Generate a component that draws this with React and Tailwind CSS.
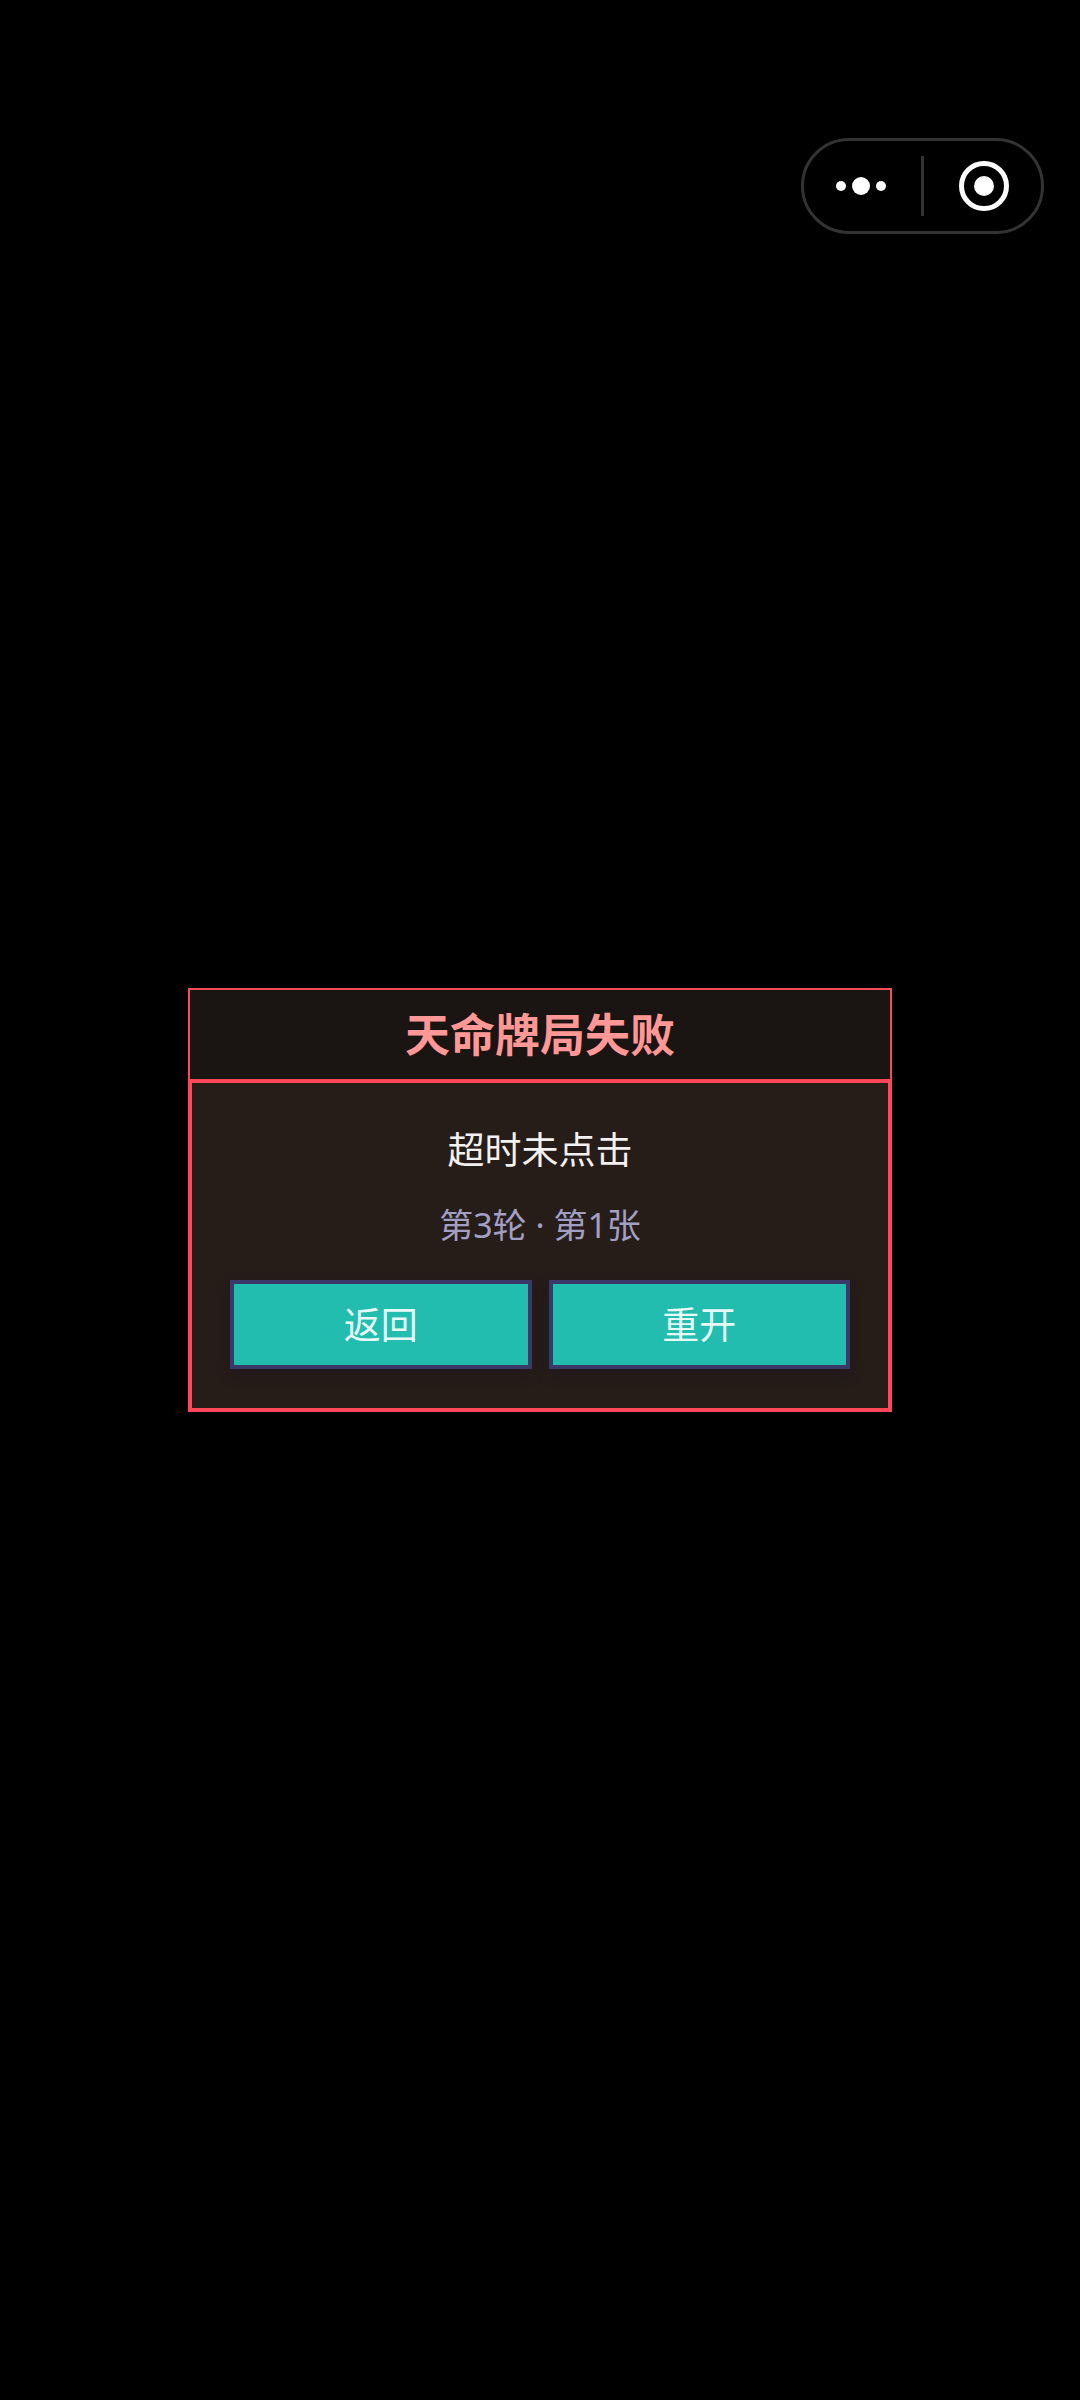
const CapsuleMenu = () => (
  <div className="flex h-24 w-[243px] items-center rounded-full border-3 border-[#333333]">
    <button type="button" aria-label="更多" className="flex h-full flex-1 items-center justify-center pr-[3px]">
      <svg className="h-5 w-[50px]" viewBox="0 0 50 20" fill="#fff">
        <circle cx="5" cy="10" r="5" />
        <circle cx="25" cy="10" r="9" />
        <circle cx="45" cy="10" r="5" />
      </svg>
    </button>
    <span className="h-[60px] w-[3px] bg-[#333333]" />
    <button type="button" aria-label="关闭" className="flex h-full flex-1 items-center justify-center pl-[3px]">
      <svg className="size-[50px]" viewBox="0 0 50 50">
        <circle cx="25" cy="25" r="22.5" fill="none" stroke="#fff" strokeWidth="5" />
        <circle cx="25" cy="25" r="10" fill="#fff" />
      </svg>
    </button>
  </div>
);

const actions = [
  { id: 'back', label: '返回' },
  { id: 'restart', label: '重开' },
];

const ResultDialog = () => (
  <section role="dialog" aria-labelledby="result-title" className="w-full max-w-[704px] text-center">
    <header className="border-2 border-b-0 border-[#f74c5a] bg-[#1a1512]">
      <h1 id="result-title" className="py-4 text-[45px] leading-[57px] font-bold text-[#ff9796]">
        天命牌局失败
      </h1>
    </header>

    <div className="border-4 border-[#ff4757] bg-[#261d19] px-[38px] py-[39px]">
      <p className="text-[37px] leading-[56px] text-[#f1f1f1]">超时未点击</p>
      <p className="mt-[22px] text-[34px] leading-[50px] text-[#a29fc4]">第3轮 · 第1张</p>

      <div className="mt-[30px] grid grid-cols-2 gap-[17px]">
        {actions.map(action => (
          <button
            key={action.id}
            type="button"
            className="h-[89px] border-4 border-[#393a67] bg-[#22bdae] text-[37px] leading-[56px] text-[#e6f9f6] shadow-[0_6px_12px_rgba(26,16,32,0.4)]"
          >
            {action.label}
          </button>
        ))}
      </div>
    </div>
  </section>
);

export default function App() {
  return (
    <div
      lang="zh-CN"
      className="grid min-h-screen bg-black font-['Noto_Sans','Noto_Sans_CJK_SC',sans-serif]"
    >
      <nav className="col-start-1 row-start-1 mt-[138px] mr-9 self-start justify-self-end">
        <CapsuleMenu />
      </nav>
      <main className="col-start-1 row-start-1 flex items-center justify-center">
        <ResultDialog />
      </main>
    </div>
  );
}
